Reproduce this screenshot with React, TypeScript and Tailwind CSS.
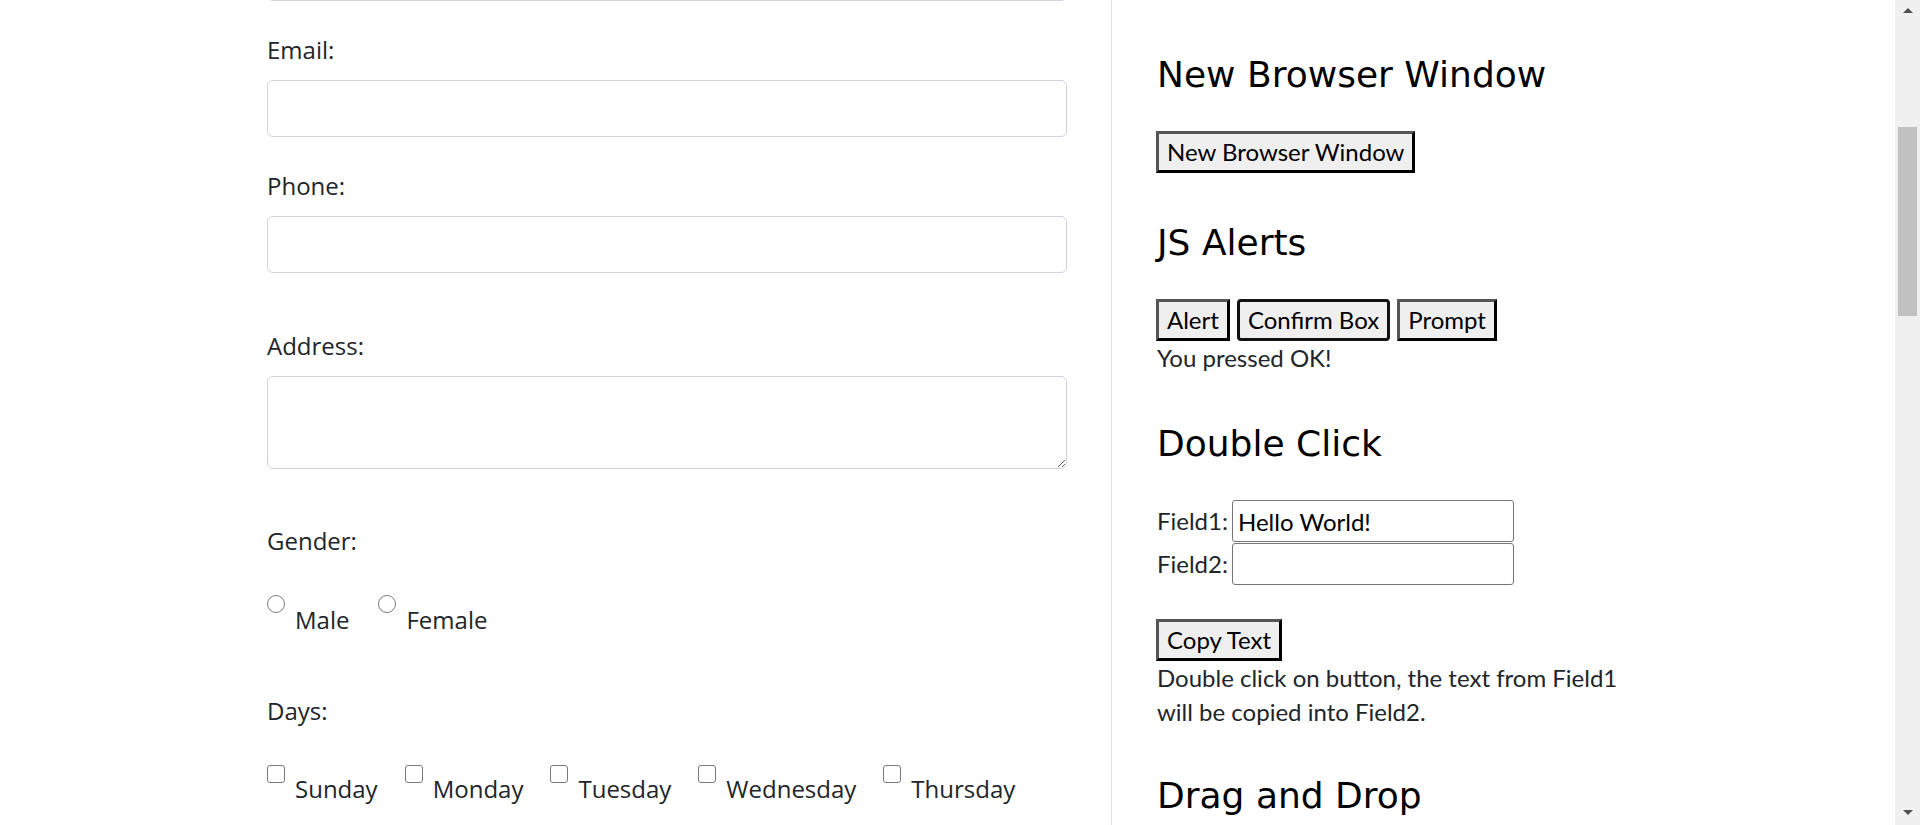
import React from "react";

const days = ["Sunday", "Monday", "Tuesday", "Wednesday", "Thursday"];

function OldButton({ label, focused }: { label: string; focused?: boolean }) {
  return (
    <button
      className={`h-[42px] bg-[#efefef] px-[8px] leading-[36px] text-black border-[3px] ${
        focused
          ? "rounded-[4px] border-[#111]"
          : "border-t-[#555] border-l-[#555] border-r-black border-b-black"
      }`}
    >
      {label}
    </button>
  );
}

function Heading({ children, className = "" }: { children: React.ReactNode; className?: string }) {
  return (
    <h2 className={`font-['DejaVu_Sans',sans-serif] text-[36px] font-normal leading-[43px] text-black ${className}`}>
      {children}
    </h2>
  );
}

export default function App() {
  return (
    <div className="flex h-[825px] overflow-hidden bg-white font-['Lato',sans-serif] text-[24px] text-[#212529]">
      <div className="flex flex-1 pl-[222px]">
        {/* form column */}
        <div className="w-[889px] shrink-0 pl-[45px] pr-[44px] font-['Open_Sans',sans-serif]">
          <input className="-mt-[56px] block h-[57px] w-[800px] rounded-[6px] border border-[#ced4da]" />

          <label className="mt-[31px] block leading-[36px]">Email:</label>
          <input className="mt-[12px] block h-[57px] w-[800px] rounded-[6px] border border-[#ced4da]" />

          <label className="mt-[31px] block leading-[36px]">Phone:</label>
          <input className="mt-[12px] block h-[57px] w-[800px] rounded-[6px] border border-[#ced4da]" />

          <label className="mt-[55px] block leading-[36px]">Address:</label>
          <textarea className="mt-[12px] block h-[93px] w-[800px] rounded-[6px] border border-[#ced4da]" />

          <label className="mt-[54px] block leading-[36px]">Gender:</label>
          <div className="mt-[36px] flex items-start">
            {["Male", "Female"].map((g) => (
              <div key={g} className="mr-[29px] flex items-start">
                <input
                  type="radio"
                  name="gender"
                  className="h-[18px] w-[18px] appearance-none rounded-full border-[1.5px] border-[#7a7a7a] bg-white"
                />
                <span className="ml-[10px] mt-[7px] leading-[36px]">{g}</span>
              </div>
            ))}
          </div>

          <label className="mt-[55px] block leading-[36px]">Days:</label>
          <div className="mt-[36px] flex flex-wrap items-start">
            {days.map((d) => (
              <div key={d} className="mr-[27px] flex items-start">
                <input
                  type="checkbox"
                  className="h-[18px] w-[18px] appearance-none rounded-[3px] border-[1.5px] border-[#7a7a7a] bg-white"
                />
                <span className="ml-[10px] mt-[6px] leading-[36px]">{d}</span>
              </div>
            ))}
          </div>
        </div>

        {/* widgets column */}
        <div className="flex-1 border-l border-[#dee2e6] pl-[45px]">
          <Heading className="mt-[53px]">New Browser Window</Heading>
          <div className="mt-[35px] -ml-[1px]">
            <OldButton label="New Browser Window" />
          </div>

          <Heading className="mt-[48px]">JS Alerts</Heading>
          <div className="mt-[35px] -ml-[1px] flex gap-[7px]">
            <OldButton label="Alert" />
            <OldButton label="Confirm Box" focused />
            <OldButton label="Prompt" />
          </div>
          <p className="leading-[34px]">You pressed OK!</p>

          <Heading className="mt-[47px]">Double Click</Heading>
          <div className="mt-[35px] flex flex-col gap-[1px]">
            {[
              ["Field1:", "Hello World!"],
              ["Field2:", ""],
            ].map(([l, v]) => (
              <div key={l} className="flex items-center">
                <span className="w-[75px] leading-[34px]">{l}</span>
                <input
                  defaultValue={v}
                  className="h-[42px] w-[282px] rounded-[3px] border border-[#767676] px-[5px] text-black"
                />
              </div>
            ))}
          </div>
          <div className="mt-[34px] -ml-[1px]">
            <OldButton label="Copy Text" />
          </div>
          <p className="leading-[34px]">
            Double click on button, the text from Field1
            <br />
            will be copied into Field2.
          </p>

          <Heading className="mt-[45px]">Drag and Drop</Heading>
        </div>
      </div>

      {/* scrollbar */}
      <div className="flex w-[25px] shrink-0 flex-col bg-[#f0f0f0]">
        <div className="flex h-[20px] items-center justify-center">
          <svg width="10" height="5" viewBox="0 0 10 5">
            <path d="M0 5 L5 0 L10 5 Z" fill="#505050" />
          </svg>
        </div>
        <div className="mx-auto mt-[107px] h-[189px] w-[19px] bg-[#c1c1c1]" />
        <div className="mt-auto flex h-[25px] items-center justify-center">
          <svg width="10" height="5" viewBox="0 0 10 5">
            <path d="M0 0 L10 0 L5 5 Z" fill="#505050" />
          </svg>
        </div>
      </div>
    </div>
  );
}
